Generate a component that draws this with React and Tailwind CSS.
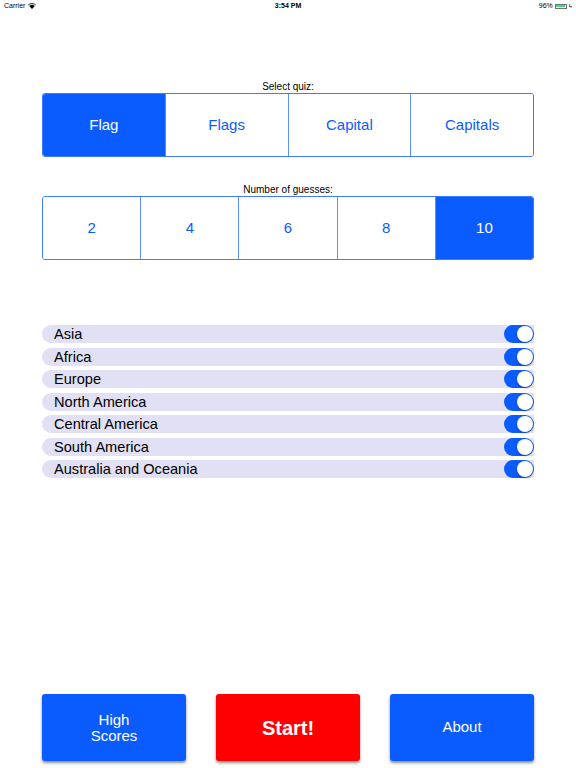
import React from "react";

function Toggle() {
  return (
    <div className="relative w-[30px] h-[18px] rounded-full bg-[#0b5cff] shrink-0">
      <div className="absolute right-[1px] top-[1px] w-[16px] h-[16px] rounded-full bg-white shadow-[0_1px_2px_rgba(0,0,0,0.35)]" />
    </div>
  );
}

function Segmented({ items, selected }) {
  return (
    <div className="flex h-[64px] border border-[#3d7bff] rounded-[3px] overflow-hidden">
      {items.map((it, i) => (
        <div
          key={it}
          className={
            "flex-1 flex items-center justify-center text-[15px] " +
            (i > 0 ? "border-l border-[#5b8fff] " : "") +
            (i === selected ? "bg-[#0b5cff] text-white" : "bg-white text-[#0b5cff]")
          }
        >
          {it}
        </div>
      ))}
    </div>
  );
}

export default function App() {
  const regions = [
    "Asia",
    "Africa",
    "Europe",
    "North America",
    "Central America",
    "South America",
    "Australia and Oceania",
  ];
  return (
    <div
      className="w-[576px] h-[768px] bg-white flex flex-col"
      style={{ fontFamily: '"Liberation Sans", Arial, sans-serif' }}
    >
      {/* status bar */}
      <div className="h-[12px] flex items-center justify-between px-[4px] text-[7px] text-black relative">
        <div className="flex items-center gap-[3px]">
          <span>Carrier</span>
          <svg width="8" height="6" viewBox="0 0 8 6">
            <path d="M4 6 L1.2 3 A4 4 0 0 1 6.8 3 Z" fill="#000" />
            <path d="M0.2 2 A5.5 5.5 0 0 1 7.8 2" stroke="#000" strokeWidth="0.8" fill="none" />
          </svg>
        </div>
        <div className="absolute left-1/2 -translate-x-1/2 font-semibold">3:54 PM</div>
        <div className="flex items-center gap-[2px]">
          <span>96%</span>
          <div className="w-[12px] h-[5px] border-[0.5px] border-gray-500 p-[0.5px] flex">
            <div className="flex-1 bg-[#4cd964]" />
          </div>
          <span className="text-[6px]">ϟ</span>
        </div>
      </div>

      <div className="px-[42px] flex flex-col">
        <div className="mt-[69px] h-[12px] text-[10px] leading-[12px] text-center text-black">Select quiz:</div>
        <Segmented items={["Flag", "Flags", "Capital", "Capitals"]} selected={0} />
        <div className="mt-[27px] h-[12px] text-[10px] leading-[12px] text-center text-black">Number of guesses:</div>
        <Segmented items={["2", "4", "6", "8", "10"]} selected={4} />

        <div className="mt-[65px] flex flex-col gap-[4.5px]">
          {regions.map((r) => (
            <div key={r} className="h-[18px] flex items-center justify-between rounded-l-full bg-[#e1e0f4]">
              <span className="pl-[12px] text-[14.6px] leading-[18px] text-black">{r}</span>
              <Toggle />
            </div>
          ))}
        </div>
      </div>

      <div className="mt-auto mb-[7px] px-[42px] flex justify-between">
        <div className="w-[144px] h-[67px] rounded-[3px] bg-[#0b5cff] text-white text-[15px] leading-[16px] flex items-center justify-center text-center shadow-[0_2px_3px_rgba(0,0,0,0.45)]">
          High<br />Scores
        </div>
        <div className="w-[144px] h-[67px] rounded-[3px] bg-[#fe0000] text-white text-[20px] font-bold flex items-center justify-center shadow-[0_2px_3px_rgba(0,0,0,0.45)]">
          Start!
        </div>
        <div className="w-[144px] h-[67px] rounded-[3px] bg-[#0b5cff] text-white text-[15px] flex items-center justify-center shadow-[0_2px_3px_rgba(0,0,0,0.45)]">
          About
        </div>
      </div>
    </div>
  );
}
